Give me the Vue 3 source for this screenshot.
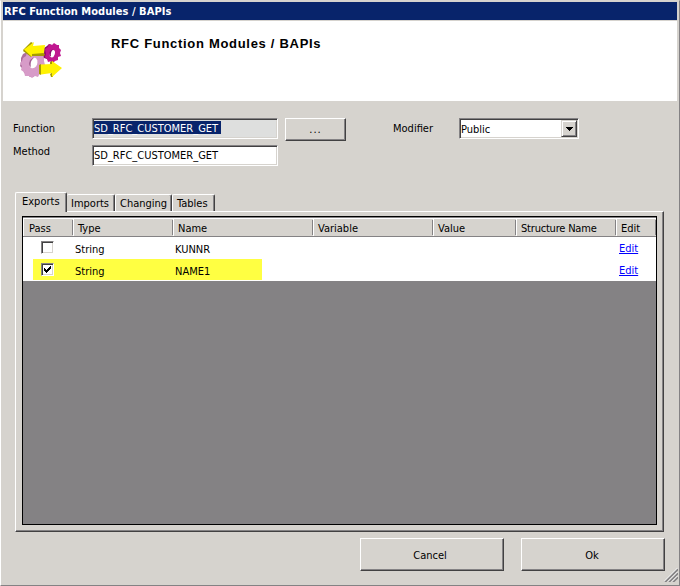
<script setup>
import { ref } from 'vue'

const tabs = [
  { label: 'Exports', key: 'exports' },
  { label: 'Imports', key: 'imports' },
  { label: 'Changing', key: 'changing' },
  { label: 'Tables', key: 'tables' },
]
const active = ref('exports')
const columns = ['Pass', 'Type', 'Name', 'Variable', 'Value', 'Structure Name', 'Edit']
const rows = ref([
  { pass: false, type: 'String', name: 'KUNNR' },
  { pass: true, type: 'String', name: 'NAME1' },
])
</script>

<template>
  <div class="window">
    <header class="titlebar"><span class="title-text">RFC Function Modules / BAPIs</span></header>

    <section class="banner">
      <svg class="logo" viewBox="0 0 44 38" width="44" height="38">
        <path fill="#ad6c9d" d="M2 17l2-4 4-2 3-2 4 1v26l-4 0-3-3-3-1-1-4-3-3 1-4z" />
        <path fill="#d79bc8" d="M4 17l3-2 1-4 4 1 2-3 4 2 3-1 2 4 2 2v4l1 4-2 2v4l-3 2-2 4-3-1-3 2-3-2-4 0-1-4-3-2 1-4-2-3 2-2z" />
        <ellipse cx="14.300" cy="22" rx="4" ry="5.400" fill="#fff" transform="rotate(18 14.300 22)" />
        <path fill="#a35c92" d="M10.500 25c-1.500-4 1-8 5-8.500-3 2-4.500 5-3.500 9.500z" />
        <path fill="#8b086c" d="M25 7l3-2 2-2 3 1v17l-3-1-2-2-3-1-1-3 1-3z" />
        <path fill="#c01790" d="M26 8l3-2 1-3 3 1 2-2 3 2 2 0 0 3 2 2-1 3 1 3-3 1 0 3-3 1-2 2-2-2-3 1-1-3-2-2 1-3z" />
        <ellipse cx="33.300" cy="12.700" rx="2.500" ry="3.800" fill="#fff" transform="rotate(18 33.300 12.700)" />
        <path fill="#8b086c" d="M30.800 15c-1-3 0-6 3.200-6.500-2 2-2.500 4-2 7z" />
        <path fill="#a59b00" d="M5 8l9 6-2 2-8-6zM11 12h13l2 1-1 2H12zM4 9l8-8 2 1-8 7z" />
        <path fill="#fff200" d="M5 8.500L15 1l-1 4 12-1-1 8-12 1v3z" />
        <path fill="#a59b00" d="M20 24l2-1v11l-2-1zM31 21l3-1v4h-3zM31 33l3-2v5l-2 0z" />
        <path fill="#fff200" d="M22 23.500l11-.5v-3l10 7-10 9v-4l-11 1.500z" />
      </svg>
      <h1>RFC Function Modules / BAPIs</h1>
    </section>

    <section class="fields">
      <div class="labels">
        <span class="lab-function">Function</span>
        <span class="lab-method">Method</span>
      </div>
      <div class="inputs">
        <div class="box readonly"><span class="selected"><span class="func-name">SD_RFC_CUSTOMER_GET</span></span></div>
        <div class="box"><span class="func-name">SD_RFC_CUSTOMER_GET</span></div>
      </div>
      <button class="btn browse">...</button>
      <span class="modifier">Modifier</span>
      <div class="box combo">
        <span class="public">Public</span>
        <span class="drop">
          <svg width="7" height="4" viewBox="0 0 7 4" shape-rendering="crispEdges"><path d="M0 0h7v1H6v1H5v1H4v1H3V3H2V2H1V1H0z" /></svg>
        </span>
      </div>
    </section>

    <nav class="tabs">
      <div v-for="t in tabs" :key="t.key" class="tab" :class="[t.key, { active: active === t.key }]" @click="active = t.key">
        <span>{{ t.label }}</span>
      </div>
    </nav>
    <section class="panel">
      <div class="grid">
        <div class="row head">
          <div v-for="(c, i) in columns" :key="c" class="cell" :class="'c' + i"><span>{{ c }}</span></div>
        </div>
        <div v-for="r in rows" :key="r.name" class="row data" :class="{ marked: r.pass }">
          <div class="cell pass">
            <span class="check" @click="r.pass = !r.pass">
              <svg v-if="r.pass" width="7" height="7" viewBox="0 0 7 7" shape-rendering="crispEdges"><path d="M0 2h1v1h1v1h1V3h1V2h1V1h1V0h1v3H6v1H5v1H4v1H3v1H2V6H1V5H0z" /></svg>
            </span>
          </div>
          <div class="cell type"><span>{{ r.type }}</span></div>
          <div class="cell name"><span>{{ r.name }}</span></div>
          <div class="cell link"><a>Edit</a></div>
        </div>
      </div>
    </section>

    <footer class="actions">
      <button class="btn wide cancel"><span>Cancel</span></button>
      <button class="btn wide"><span>Ok</span></button>
    </footer>
    <svg class="grip" width="14" height="14" viewBox="0 0 14 14">
      <g stroke-width="2" stroke="#848284"><path d="M1 14L14 1M5 14L14 5M9 14L14 9" /></g>
      <g stroke-width="1" stroke="#fff"><path d="M0 13.500L13.500 0M4 13.500L13.500 4M8 13.500L13.500 8" /></g>
    </svg>
  </div>
</template>

<style>
body { margin: 0; background: #d6d3ce; overflow: hidden; }
</style>

<style scoped>
* { box-sizing: border-box; }
.window {
  position: relative; width: 680px; height: 586px; background: #d6d3ce;
  border: 1px solid #fff; border-top-color: #d6d3ce; border-right-color: #848284; border-bottom-color: #848284;
  padding: 1px 2px 0 2px; color: #000;
  font: 11px/14px "DejaVu Sans Condensed", "DejaVu Sans", sans-serif; font-stretch: condensed;
  display: flex; flex-direction: column;
}
span, a { white-space: nowrap; }
.titlebar { height: 18px; background: #08246b; color: #fff; font-weight: bold; line-height: 19px; padding-left: 1px; letter-spacing: .05px; flex: none; }
.banner { margin-top: 1px; height: 80px; background: #fff; display: flex; flex: none; }
.logo { margin: 20px 0 0 16px; flex: none; }
h1 { margin: 15px 0 0 48px; font: bold 13px/16px "Liberation Sans", Arial, sans-serif; letter-spacing: .7px; white-space: nowrap; }

.fields { display: flex; height: 91px; padding: 17px 0 0 10px; align-items: flex-start; flex: none; }
.labels { width: 79px; display: flex; flex-direction: column; gap: 9px; padding-top: 4px; }
.inputs { width: 186px; display: flex; flex-direction: column; gap: 6px; }
.box {
  height: 21px; background: #fff; border: 1px solid; border-color: #848284 #fff #fff #848284;
  box-shadow: inset 1px 1px #424142, inset -1px -1px #d6d3ce; padding: 3px 0 0 1px; display: flex; align-items: flex-start;
}
.readonly { background: #dedfde; }
.selected { display: block; height: 13px; width: 127px; line-height: 15px; background: #08246b; color: #fff; margin-top: -1px; }
.btn {
  background: #d6d3ce; border: 1px solid; border-color: #fff #424142 #424142 #fff; box-shadow: inset -1px -1px #848284;
  font: inherit; color: #000; padding: 0; border-radius: 0; display: flex; align-items: center; justify-content: center;
}
.browse { width: 61px; height: 23px; margin-left: 7px; letter-spacing: 1px; }
.modifier { margin: 4px 0 0 47px; width: 66px; }
.combo { width: 120px; justify-content: space-between; padding: 2px 2px 0 1px; }
.public { margin-top: 2px; }
.drop { width: 16px; height: 17px; margin: -1px -1px 0 0; background: #d6d3ce; border: 1px solid; border-color: #d6d3ce #424142 #424142 #d6d3ce; box-shadow: inset 1px 1px #fff, inset -1px -1px #848284; display: flex; align-items: center; justify-content: center; }

.tabs { display: flex; align-items: flex-end; height: 19px; margin-left: 12px; position: relative; z-index: 1; flex: none; }
.tab {
  height: 17px; border: 1px solid; border-color: #fff #424142 transparent #fff; border-bottom: 0; border-left: 1px solid #fff;
  border-radius: 2px 2px 0 0; box-shadow: inset -1px 0 #848284; background: #d6d3ce; padding: 2px 0 0 4px;
}
.tab.active { width: 52px; height: 20px; margin-bottom: -1px; padding: 2px 0 0 6px; }
.imports { width: 48px; border-left: 0; }
.changing { width: 57px; }
.tables { width: 43px; }
.panel {
  width: 649px; height: 321px; margin-left: 12px; flex: none;
  border: 1px solid; border-color: #fff #424142 #424142 #fff; box-shadow: inset -1px -1px #848284; padding: 4px 6px 6px 6px;
}
.grid { width: 635px; height: 309px; border: 1px solid #000; background: #848284; }
.row { display: flex; }
.head { height: 20px; background: #d6d3ce; border-top: 1px solid #848284; border-bottom: 1px solid #848284; box-shadow: inset 0 1px #fff; }
.head .cell { position: relative; padding: 4px 0 0 4px; border-left: 1px solid #fff; }
.head .c0 { padding-left: 5px; }
.head .cell::after { content: ""; position: absolute; right: 0; top: 2px; bottom: 1px; width: 1px; background: #848284; }
.c0 { width: 50px; } .c1 { width: 100px; } .c2 { width: 140px; } .c3 { width: 120px; } .c4 { width: 83px; } .c5 { width: 100px; letter-spacing: -.2px; } .c6 { width: 40px; }
.data { height: 22px; background: #fff; }
.marked { background: linear-gradient(#ffff42, #ffff42) 10px 0 / 229px 21px no-repeat #fff; }
.data .cell { padding-top: 6px; }
.data .pass { width: 52px; padding: 4px 0 0 18px; }
.check { width: 13px; height: 13px; background: #fff; border: 1px solid; border-color: #848284 #fff #fff #848284; box-shadow: inset 1px 1px #424142, inset -1px -1px #d6d3ce; display: flex; align-items: center; justify-content: center; }
.type { width: 100px; }
.name { width: 444px; }
.data .link { padding-top: 5px; }
.link a { color: #00f; text-decoration: underline; text-underline-offset: 1px; }

.actions { display: flex; justify-content: flex-end; gap: 17px; padding: 6px 12px 0 0; }
.wide { width: 144px; height: 33px; padding: 2px 2px 0 0; }
.cancel { padding-right: 4px; }
.grip { position: absolute; right: 1px; bottom: 3px; }
</style>
